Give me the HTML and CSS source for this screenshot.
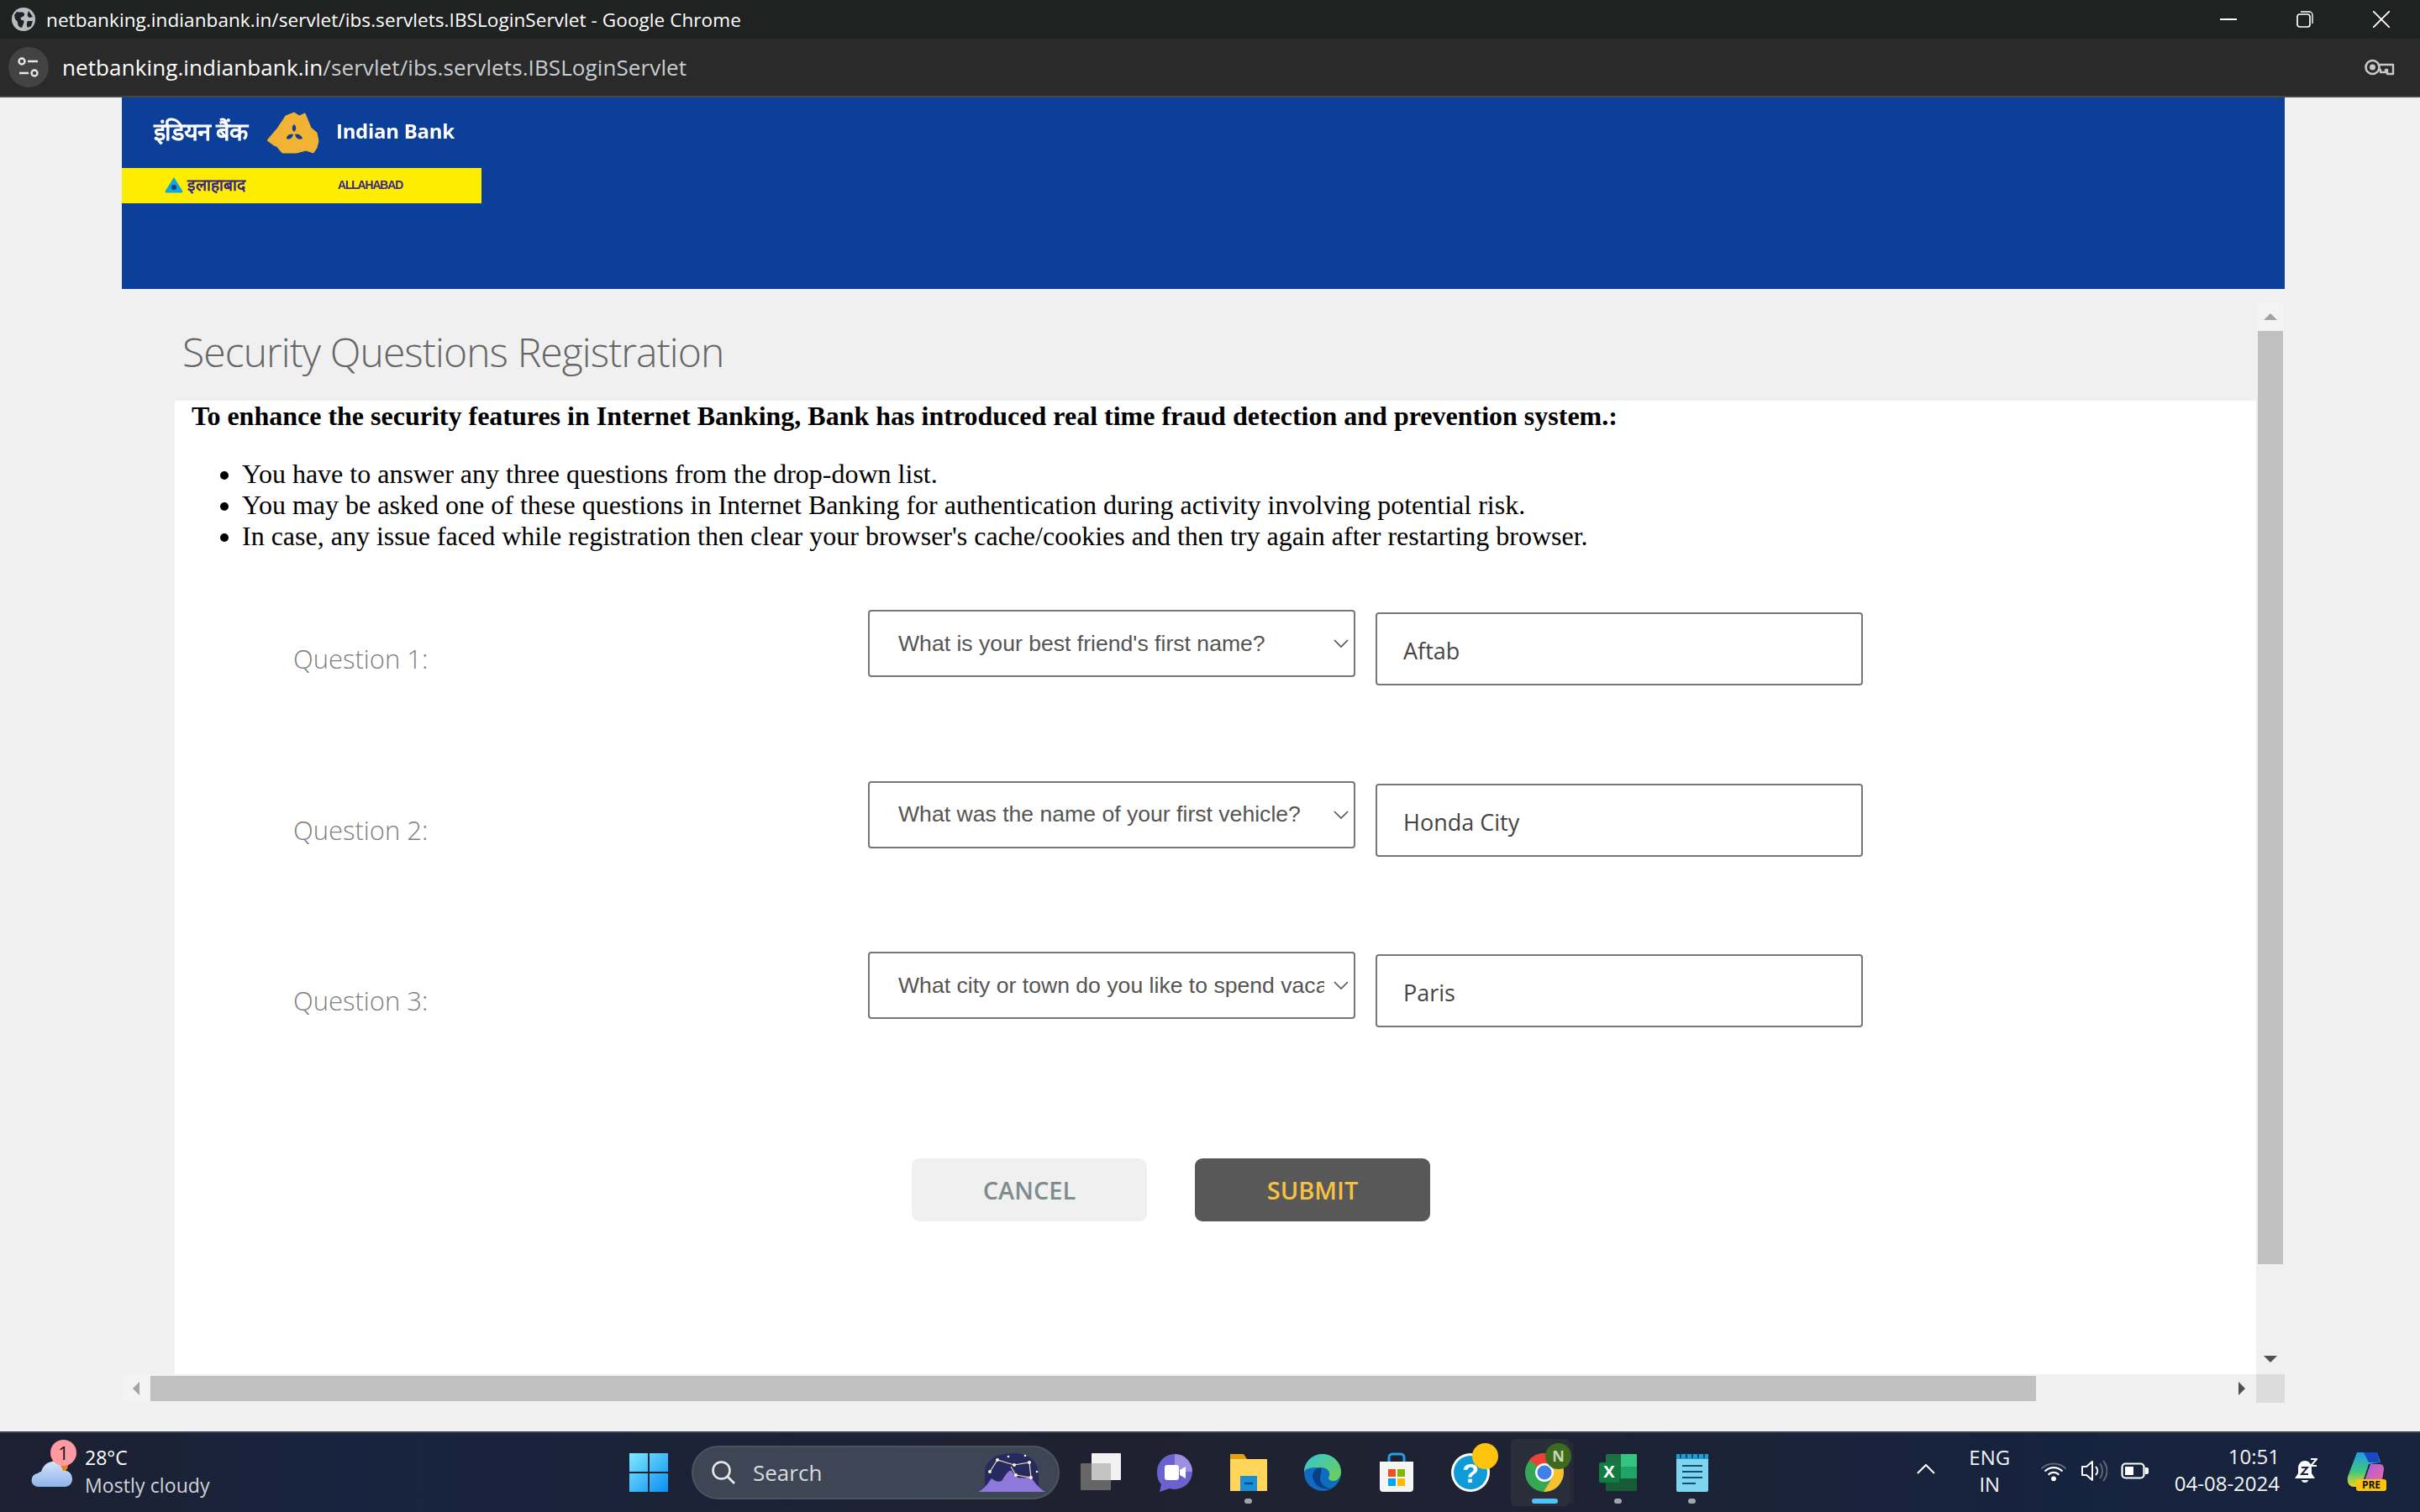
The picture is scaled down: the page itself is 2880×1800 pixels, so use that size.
FILE: index.html
```html
<!DOCTYPE html>
<html lang="en">
<head>
<meta charset="utf-8">
<title>Security Questions Registration</title>
<link rel="stylesheet" href="styles.css">
</head>
<body>
<div class="screen">
  <header class="titlebar">
    <svg class="globe" viewBox="0 0 28 28"><circle cx="14" cy="14" r="14" fill="#b9bcc0"/><path d="M6 5c3 1 6 0 8 1 2 2 1 4-1 5-3 0-3 3-1 4 3 0 3 2 2 4l-2 5c-3 0-5-3-5-6 0-2-2-3-3-4L3 9zM20 4l5 7-4 1c-2-1-3-3-2-5zM19 16l6 0-2 6-4 2c-1-2-2-5 0-8z" fill="#202222"/></svg>
    <span class="title-text">netbanking.indianbank.in/servlet/ibs.servlets.IBSLoginServlet - Google Chrome</span>
    <div class="winctl">
      <svg viewBox="0 0 20 20" class="wc"><path d="M0 10h20" stroke="#fff" stroke-width="2"/></svg>
      <svg viewBox="0 0 20 20" class="wc"><rect x="1" y="4" width="15" height="15" rx="3" fill="none" stroke="#fff" stroke-width="1.7"/><path d="M5 1h10a4 4 0 0 1 4 4v10" fill="none" stroke="#fff" stroke-width="1.4"/></svg>
      <svg viewBox="0 0 20 20" class="wc"><path d="M0 0l20 20M20 0L0 20" stroke="#fff" stroke-width="1.8"/></svg>
    </div>
  </header>
  <div class="addressbar">
    <div class="tune">
      <svg viewBox="0 0 26 28" class="tune-ico"><circle cx="5" cy="7" r="3.5" fill="none" stroke="#e6e6e6" stroke-width="2.4"/><path d="M12 7h12M2 21h11" stroke="#e6e6e6" stroke-width="2.6"/><circle cx="20" cy="21" r="3.5" fill="none" stroke="#e6e6e6" stroke-width="2.4"/></svg>
    </div>
    <span class="url"><span class="url-host">netbanking.indianbank.in</span>/servlet/ibs.servlets.IBSLoginServlet</span>
    <svg class="key" viewBox="0 0 36 20"><circle cx="9.500" cy="10" r="8" fill="none" stroke="#c8c8c8" stroke-width="2.600"/><circle cx="9.500" cy="10" r="3.500" fill="#c8c8c8"/><path d="M17 7h17v11h-7v-5h-2v3h-6v-3h-3" fill="none" stroke="#c8c8c8" stroke-width="2.400" stroke-linejoin="round"/></svg>
  </div>

  <main class="viewport">
    <div class="frame">
      <div class="banner">
        <div class="logo">
          <span class="logo-hi">इंडियन बैंक</span>
          <svg class="emblem" viewBox="0 0 62 50"><path d="M0 34L12 20 22 5 32 1 38 5 45 2 52 19 59 25 61 35 59 43 55 49 46 46 35 49 18 49 11 41 8 40z" fill="#f2b233" stroke="#f2b233" stroke-width="1" stroke-linejoin="round"/><path d="M32 15c3 2 3 7 0 9-3-2-3-7 0-9zM23 32c0-4 4-6 8-5-1 4-4 7-8 5zM33 27c4-1 8 1 9 5-4 2-8 0-9-5z" fill="#0c3f99"/></svg>
          <span class="logo-en">Indian Bank</span>
        </div>
        <div class="logo-strip">
          <svg class="tri" viewBox="0 0 22 20"><path d="M11 1L21 17a1.500 1.500 0 0 1-1 2.500H2A1.500 1.500 0 0 1 1 17z" fill="#10a7df"/><circle cx="11" cy="13" r="3" fill="#1c3c92"/></svg>
          <span class="strip-hi">इलाहाबाद</span>
          <span class="strip-en">ALLAHABAD</span>
        </div>
      </div>
      <div class="scroller">
        <div class="content">
          <h1 class="heading">Security Questions Registration</h1>
          <div class="sheet">
            <p class="intro">To enhance the security features in Internet Banking, Bank has introduced real time fraud detection and prevention system.:</p>
            <ul class="rules">
              <li>You have to answer any three questions from the drop-down list.</li>
              <li>You may be asked one of these questions in Internet Banking for authentication during activity involving potential risk.</li>
              <li>In case, any issue faced while registration then clear your browser's cache/cookies and then try again after restarting browser.</li>
            </ul>
            <form class="qa">
              <div class="qa-row">
                <label class="qa-label">Question 1:</label>
                <div class="fake-select"><span class="fs-text">What is your best friend's first name?</span><svg class="chev" viewBox="0 0 18 10"><path d="M1 1l8 8 8-8" fill="none" stroke="#555" stroke-width="1.700"/></svg></div>
                <div class="fake-input">Aftab</div>
              </div>
              <div class="qa-row">
                <label class="qa-label">Question 2:</label>
                <div class="fake-select"><span class="fs-text">What was the name of your first vehicle?</span><svg class="chev" viewBox="0 0 18 10"><path d="M1 1l8 8 8-8" fill="none" stroke="#555" stroke-width="1.700"/></svg></div>
                <div class="fake-input">Honda City</div>
              </div>
              <div class="qa-row">
                <label class="qa-label">Question 3:</label>
                <div class="fake-select"><span class="fs-text">What city or town do you like to spend vacation?</span><svg class="chev" viewBox="0 0 18 10"><path d="M1 1l8 8 8-8" fill="none" stroke="#555" stroke-width="1.700"/></svg></div>
                <div class="fake-input">Paris</div>
              </div>
              <div class="actions">
                <button type="button" class="btn btn-cancel">CANCEL</button>
                <button type="button" class="btn btn-submit">SUBMIT</button>
              </div>
            </form>
          </div>
        </div>
        <div class="vbar">
          <div class="arrow-btn up"><span class="tri-up"></span></div>
          <div class="vthumb"></div>
          <div class="arrow-btn down"><span class="tri-down"></span></div>
        </div>
        <div class="hbar">
          <div class="arrow-btn-h left"><span class="tri-left"></span></div>
          <div class="hthumb"></div>
          <div class="arrow-btn-h right"><span class="tri-right"></span></div>
        </div>
        <div class="corner"></div>
      </div>
    </div>
  </main>

  <footer class="taskbar">
    <div class="weather">
      <div class="weather-ico">
        <svg viewBox="0 0 48 30" class="cloud"><defs><linearGradient id="cg" x1="0" y1="0" x2="0" y2="1"><stop offset="0" stop-color="#d4e3f8"/><stop offset="1" stop-color="#8fb4ea"/></linearGradient></defs><circle cx="33" cy="4" r="10" fill="#f07f13"/><path d="M8 30a8 8 0 0 1-1-16c1-1 2-2 4-2 2-7 7-12 14-12 6 0 10 4 12 11 6-1 11 3 11 10 0 5-4 9-9 9z" fill="url(#cg)"/></svg>
        <span class="badge">1</span>
      </div>
      <div class="weather-text"><span class="temp">28°C</span><span class="cond">Mostly cloudy</span></div>
    </div>
    <div class="dock">
      <svg class="ti start" viewBox="0 0 48 48"><defs><linearGradient id="wg" x1="0" y1="0" x2="1" y2="1"><stop offset="0" stop-color="#7fe9ff"/><stop offset="1" stop-color="#0a8ff0"/></linearGradient></defs><path d="M1 1h22v22H1zM25 1h22v22H25zM1 25h22v22H1zM25 25h22v22H25z" fill="url(#wg)"/></svg>
      <div class="search">
        <svg class="search-ico" viewBox="0 0 30 30"><circle cx="12.500" cy="12.500" r="10" fill="none" stroke="#e8e8e8" stroke-width="2.600"/><path d="M20 20l8 8" stroke="#e8e8e8" stroke-width="2.800"/></svg>
        <span class="search-text">Search</span>
        <svg class="search-art" viewBox="0 0 80 46"><path d="M8 44V22C8 8 24 0 42 0s30 10 30 24v20z" fill="#262a5e"/><path d="M0 46c6-2 12-10 16-16 4 3 8 5 12 3 4-6 8-14 12-12 4 6 8 10 12 8 4 2 8-2 10-2 4 6 10 15 18 19z" fill="#8f78dc"/><path d="M14 22l9-14 20 6 18-3 2 18-18-3-6-10" fill="none" stroke="#e9dfb8" stroke-width="1.200"/><circle cx="14" cy="22" r="2" fill="#fff6cf"/><circle cx="23" cy="8" r="2" fill="#fff6cf"/><circle cx="43" cy="14" r="2" fill="#fff6cf"/><circle cx="61" cy="11" r="2" fill="#fff6cf"/><circle cx="63" cy="29" r="2" fill="#fff6cf"/><circle cx="45" cy="26" r="2" fill="#fff6cf"/><circle cx="56" cy="3" r="1.300" fill="#fff6cf"/><circle cx="36" cy="4" r="1.300" fill="#fff6cf"/><circle cx="70" cy="22" r="1.300" fill="#fff6cf"/></svg>
      </div>
      <svg class="ti" viewBox="0 0 48 48"><rect x="13" y="1" width="35" height="32" rx="1" fill="#f2f2f2"/><rect x="0" y="13" width="36" height="32" rx="1" fill="#666"/><rect x="13" y="13" width="23" height="20" fill="#c4c4c4"/></svg>
      <svg class="ti" viewBox="0 0 48 48"><path d="M24 2a21 21 0 0 1 21 21 21 21 0 0 1-27 20l-12 4 2-9C4 34 3 29 3 23A21 21 0 0 1 24 2z" fill="#6a63cf"/><path d="M24 2a21 21 0 0 1 21 21H24z" fill="#9c8ee0"/><rect x="12" y="15" width="17" height="18" rx="3" fill="#fff"/><path d="M30 21l7-4v14l-7-4z" fill="#fff"/></svg>
      <div class="ti-wrap">
        <svg class="ti" viewBox="0 0 48 48"><path d="M2 2h16l4 6h24v38H2z" fill="#e0a213"/><path d="M2 8h44v38H2z" fill="#ffd65a"/><path d="M14 28h20v18H14z" fill="#1b8fd6"/><path d="M19 37h10" stroke="#0b4f8c" stroke-width="2.500"/></svg>
        <span class="dot"></span>
      </div>
      <svg class="ti" viewBox="0 0 48 48"><defs><linearGradient id="eg1" x1="0" y1="0" x2="1" y2="1"><stop offset="0" stop-color="#37c3d8"/><stop offset="1" stop-color="#6fd14a"/></linearGradient></defs><circle cx="24" cy="24" r="22" fill="#0f6cc0"/><path d="M2 24C2 10 13 2 24 2c12 0 22 10 22 21 0 6-4 11-9 11-4 0-6-2-6-4 3-4 1-12-9-12C12 18 3 18 2 24z" fill="url(#eg1)"/><path d="M22 18c-8 1-12 8-9 15 3 8 12 12 21 10-9-1-13-7-13-12 0-5 3-8 1-13z" fill="#0a3f86"/></svg>
      <svg class="ti" viewBox="0 0 48 48"><path d="M15 11V6a4 4 0 0 1 4-4h10a4 4 0 0 1 4 4v5" fill="none" stroke="#22a0e8" stroke-width="3"/><path d="M4 11h40v32a4 4 0 0 1-4 4H8a4 4 0 0 1-4-4z" fill="#f5f5f5"/><path d="M14 20h9v9h-9z" fill="#f25022"/><path d="M25 20h9v9h-9z" fill="#7fba00"/><path d="M14 31h9v9h-9z" fill="#00a4ef"/><path d="M25 31h9v9h-9z" fill="#ffb900"/></svg>
      <div class="ti-wrap">
        <svg class="ti" viewBox="0 0 48 48"><circle cx="24" cy="24" r="23" fill="#fff"/><circle cx="24" cy="24" r="20" fill="#0f9bd8"/><text x="24" y="36" class="help-q">?</text></svg>
        <span class="help-dot"></span>
      </div>
      <div class="ti-active">
        <svg class="ti" viewBox="0 0 48 48"><circle cx="24" cy="24" r="23" fill="#34a853"/><path d="M24 1a23 23 0 0 1 20 12H24l-8 4L6 9A23 23 0 0 1 24 1z" fill="#ea4335"/><path d="M44 13a23 23 0 0 1-21 34l11-18V13z" fill="#fbc02d"/><circle cx="24" cy="24" r="11" fill="#fff"/><circle cx="24" cy="24" r="8.500" fill="#3f7fe8"/></svg>
        <span class="n-badge">N</span>
        <span class="run-bar"></span>
      </div>
      <div class="ti-wrap">
        <svg class="ti" viewBox="0 0 48 48"><rect x="9" y="2" width="37" height="44" rx="2" fill="#1d6f42"/><rect x="27" y="2" width="19" height="15" fill="#33c481"/><rect x="27" y="17" width="19" height="14" fill="#21a366"/><rect x="9" y="31" width="37" height="15" fill="#185c37"/><rect x="1" y="12" width="24" height="24" rx="2" fill="#107c41"/><text x="13" y="30" class="xl-x">X</text></svg>
        <span class="dot"></span>
      </div>
      <div class="ti-wrap">
        <svg class="ti" viewBox="0 0 48 48"><rect x="5" y="5" width="38" height="42" rx="2" fill="#7fd4ee"/><rect x="5" y="2" width="38" height="6" fill="#1c9ed8"/><path d="M12 16h24M12 23h24M12 30h24M12 37h16" stroke="#114f76" stroke-width="2.200"/><path d="M10 1v6M17 1v6M24 1v6M31 1v6M38 1v6" stroke="#0e3f60" stroke-width="1.800"/></svg>
        <span class="dot"></span>
      </div>
    </div>
    <div class="tray">
      <svg class="caret" viewBox="0 0 22 12"><path d="M1 11l10-10 10 10" fill="none" stroke="#fff" stroke-width="2"/></svg>
      <div class="lang"><span>ENG</span><span>IN</span></div>
      <svg class="tray-ico wifi" viewBox="0 0 30 24"><path d="M1 9a20 20 0 0 1 28 0" fill="none" stroke="#5e6674" stroke-width="2"/><path d="M5 12a14 14 0 0 1 20 0M9 16a8 8 0 0 1 12 0" fill="none" stroke="#fff" stroke-width="2.200"/><circle cx="15" cy="20.500" r="2.800" fill="#fff"/></svg>
      <svg class="tray-ico vol" viewBox="0 0 32 26"><path d="M2 8h5l7-6v22l-7-6H2z" fill="none" stroke="#fff" stroke-width="2" stroke-linejoin="round"/><path d="M18 8c3 3 3 7 0 10" fill="none" stroke="#fff" stroke-width="2"/><path d="M23 4c4 5 4 13 0 18M27 1c6 7 6 17 0 24" fill="none" stroke="#5e6674" stroke-width="2"/></svg>
      <svg class="tray-ico batt" viewBox="0 0 33 20"><rect x="1.500" y="1.500" width="26" height="17" rx="4" fill="none" stroke="#fff" stroke-width="2.200"/><rect x="5" y="5" width="10" height="10" fill="#fff"/><path d="M29 6h2a2 2 0 0 1 2 2v4a2 2 0 0 1-2 2h-2z" fill="#fff"/></svg>
      <div class="clock"><span>10:51</span><span>04-08-2024</span></div>
      <svg class="tray-ico bell" viewBox="0 0 27 30"><path d="M12 3c5 0 8 4 8 9v6l4 6H0l4-6v-6c0-5 3-9 8-9zM8 26h8c0 4-8 4-8 0z" fill="#fff"/><path d="M8 11h7l-7 8h8" fill="none" stroke="#182340" stroke-width="2"/><path d="M19 1h7l-7 8h7" fill="none" stroke="#fff" stroke-width="2"/></svg>
      <div class="copilot">
        <svg viewBox="0 0 44 44" class="cop-ico"><defs><linearGradient id="c1" x1="0" y1="0" x2="0" y2="1"><stop offset="0" stop-color="#1f9be8"/><stop offset=".55" stop-color="#3fc77f"/><stop offset="1" stop-color="#f4d21f"/></linearGradient><linearGradient id="c2" x1="0" y1="0" x2="1" y2="1"><stop offset="0" stop-color="#a45be0"/><stop offset="1" stop-color="#f46aa0"/></linearGradient></defs><path d="M12 1h24l4 12-14 2-9 27H8C2 42 0 36 1 30z" fill="url(#c1)"/><path d="M20 1h16l3 12H26z" fill="#1648c8"/><path d="M28 15h11c4 0 5 3 5 6l-3 19c0 2-4 3-6 3H18z" fill="url(#c2)"/></svg>
        <span class="pre">PRE</span>
      </div>
    </div>
  </footer>
</div>
</body>
</html>
```

FILE: styles.css
```css
* { box-sizing: border-box; }
html, body { margin: 0; padding: 0; }
body { width: 2880px; height: 1800px; overflow: hidden; font-family: "Liberation Serif", serif; background: #f0f0f0; }
.screen { width: 2880px; height: 1800px; display: flex; flex-direction: column; }

/* browser chrome */
.titlebar { height: 46px; background: #202222; display: flex; align-items: center; padding: 0 0 0 14px; color: #fff; font-family: "Open Sans", sans-serif; font-size: 22.5px; }
.globe { width: 28px; height: 28px; margin-right: 13px; }
.title-text { letter-spacing: 0.08px; white-space: nowrap; }
.winctl { margin-left: auto; display: flex; gap: 71px; padding-right: 36px; }
.wc { width: 20px; height: 20px; }
.addressbar { height: 70px; background: #2a2a2a; border-bottom: 2px solid #454545; display: flex; align-items: center; padding: 0 0 0 10px; font-family: "Open Sans", sans-serif; font-size: 26px; color: #c9cdd1; }
.tune { width: 48px; height: 48px; border-radius: 50%; background: #434343; display: flex; align-items: center; justify-content: center; margin-right: 16px; }
.tune-ico { width: 26px; height: 28px; }
.url { letter-spacing: 0.1px; white-space: nowrap; }
.url-host { color: #fff; }
.key { width: 36px; height: 20px; margin-left: auto; margin-right: 30px; }

/* page frame */
.viewport { height: 1588px; background: #f0f0f0; padding-left: 145px; }
.frame { width: 2574px; height: 1554px; display: flex; flex-direction: column; }
.banner { height: 228px; background: #0c3f99; display: flex; flex-direction: column; }
.logo { height: 84px; width: 428px; display: flex; align-items: center; color: #fff; filter: blur(0.5px); }
.logo-hi { font-family: "Liberation Sans", sans-serif; font-weight: 700; font-size: 29px; margin-left: 38px; width: 112px; padding-bottom: 6px; white-space: nowrap; letter-spacing: -1px; }
.emblem { width: 62px; height: 50px; margin-left: 23px; flex: none; }
.logo-en { font-family: "Open Sans", sans-serif; font-weight: 700; font-size: 24px; margin-left: 20px; padding-bottom: 6px; white-space: nowrap; letter-spacing: -0.3px; }
.logo-strip { width: 428px; height: 42px; background: #ffed00; display: flex; align-items: center; color: #35258a; font-family: "Liberation Sans", sans-serif; font-weight: 700; }
.tri { width: 22px; height: 20px; margin: 0 0 2px 51px; flex: none; filter: blur(0.4px); }
.strip-hi { font-size: 19.5px; margin-left: 5px; width: 179px; padding-bottom: 4px; white-space: nowrap; filter: blur(0.4px); }
.strip-en { font-size: 14px; letter-spacing: -1.2px; padding-bottom: 2px; white-space: nowrap; filter: blur(0.4px); }

.scroller { flex: 1; display: grid; grid-template-columns: 2540px 34px; grid-template-rows: 1292px 34px; }
.content { padding-left: 63px; display: flex; flex-direction: column; min-width: 0; }
.heading { margin: 0; height: 133px; padding: 43px 0 0 9px; font-family: "Open Sans", sans-serif; font-weight: 300; font-size: 48px; letter-spacing: -0.9px; line-height: 64px; color: #666; white-space: nowrap; }
.sheet { flex: 1; background: #fff; padding-left: 20px; }
.intro { margin: 0; font-weight: 700; font-size: 32px; line-height: 37px; color: #000; white-space: nowrap; }
.rules { margin: 32px 0 0; padding: 0 0 0 60px; font-size: 32px; line-height: 36.8px; color: #000; }
.rules li { white-space: nowrap; }

.qa { display: flex; flex-direction: column; margin-top: 70px; }
.qa-row { height: 203.500px; display: grid; grid-template-columns: 781px 580px 580px; column-gap: 24px; align-items: start; }
.qa-label { padding: 36px 0 0 121px; font-family: "Open Sans", sans-serif; font-size: 31px; line-height: 44px; color: #7e7e7e; font-weight: 300; }
.fake-select { height: 80px; width: 580px; border: 2px solid #767676; border-radius: 4px; display: flex; align-items: center; font-family: "Liberation Sans", sans-serif; font-size: 26.6px; color: #555; padding-left: 34px; }
.fs-text { display: block; width: 507px; overflow: hidden; white-space: nowrap; }
.chev { width: 18px; height: 10px; margin-left: 11px; flex: none; }
.fake-input { margin-top: 3px; height: 87px; width: 580px; border: 2px solid #767676; border-radius: 4px; display: flex; align-items: center; padding: 4px 0 0 31px; font-family: "Open Sans", sans-serif; font-size: 27px; color: #444; }

.actions { display: flex; gap: 57px; padding: 42px 0 0 857px; }
.btn { width: 280px; height: 75px; border: 0; border-radius: 9px; font-family: "Open Sans", sans-serif; font-weight: 600; font-size: 29px; }
.btn-cancel { background: #f0f0f0; color: #7f8c8d; }
.btn-submit { background: #585858; color: #f5c242; }

/* scrollbars */
.vbar { background: #f0f0f0; padding-top: 16px; display: flex; flex-direction: column; align-items: center; }
.arrow-btn { width: 34px; height: 34px; display: flex; align-items: center; justify-content: center; background: #f3f3f3; flex: none; }
.arrow-btn.down { background: #f0f0f0; height: 131px; align-items: flex-end; padding-bottom: 14px; }
.vthumb { width: 30px; height: 1111px; background: #c0c0c0; flex: none; }
.hbar { background: #f0f0f0; display: flex; align-items: center; }
.arrow-btn-h { width: 34px; height: 34px; display: flex; align-items: center; justify-content: center; background: #f3f3f3; flex: none; }
.arrow-btn-h.right { margin-left: auto; background: #f0f0f0; }
.hthumb { width: 2244px; height: 30px; background: #c0c0c0; }
.corner { background: #dcdcdc; }
.tri-up, .tri-down, .tri-left, .tri-right { display: block; width: 0; height: 0; border-style: solid; border-color: transparent; }
.tri-up { border-width: 0 8px 8px; border-bottom-color: #a3a3a3; }
.tri-down { border-width: 8px 8px 0; border-top-color: #505050; }
.tri-left { border-width: 8px 8px 8px 0; border-right-color: #a3a3a3; }
.tri-right { border-width: 8px 0 8px 8px; border-left-color: #505050; }

/* taskbar */
.taskbar { height: 96px; border-top: 2px solid #3b404e; background: linear-gradient(90deg, #1d2030 0%, #18243f 14%, #1f2130 45%, #1e2232 62%, #16233f 85%, #18233e 100%); display: flex; align-items: center; position: relative; color: #fff; font-family: "Open Sans", sans-serif; }
.weather { display: flex; align-items: center; width: 720px; padding-left: 38px; }
.weather-ico { width: 62px; height: 64px; position: relative; }
.cloud { width: 48px; height: 30px; position: absolute; left: 0; top: 19px; overflow: visible; }
.badge { position: absolute; left: 22px; top: -7px; width: 31px; height: 31px; border-radius: 50%; background: #ff9aa2; color: #111; font-size: 22px; line-height: 31px; text-align: center; }
.weather-text { display: flex; flex-direction: column; font-size: 23px; line-height: 33px; margin-left: 1px; padding-bottom: 2px; }
.temp { color: #fff; }
.cond { color: #d2d4d8; letter-spacing: 0.1px; }
.dock { position: absolute; left: 748px; top: 4px; display: flex; align-items: center; height: 86px; }
.ti { width: 48px; height: 48px; display: block; flex: none; }
.search { width: 438px; height: 64px; margin: 0 25px 0 27px; border-radius: 32px; background: #3e4656; border: 2px solid #4b5260; display: flex; align-items: center; padding-left: 21px; flex: none; }
.search-ico { width: 30px; height: 30px; flex: none; }
.search-text { font-size: 26px; color: #d8dade; margin-left: 20px; }
.search-art { width: 80px; height: 46px; margin-left: auto; margin-right: 15px; }
.dock > svg.ti, .dock > .ti-wrap { margin-right: 40px; }
.dock > svg.start { margin-right: 0; }
.ti-wrap { position: relative; width: 48px; height: 48px; flex: none; }
.dot { position: absolute; left: 19px; top: 55px; width: 9px; height: 6px; border-radius: 3px; background: #a3a5a8; }
.help-q { font-family: "Liberation Sans", sans-serif; font-weight: 700; font-size: 32px; fill: #fff; text-anchor: middle; }
.help-dot { position: absolute; left: 26px; top: -11px; width: 31px; height: 31px; border-radius: 50%; background: #fdc30d; }
.ti-active { position: relative; width: 70px; height: 80px; margin: 0 34px 0 -16px; padding: 16px 0 0 16px; background: #2a2d3a; border-radius: 6px; flex: none; box-shadow: 8px 0 0 -3px #262935; }
.n-badge { position: absolute; left: 41px; top: 5px; width: 31px; height: 31px; border-radius: 50%; background: #3e6a1e; color: #c9d5b5; font-size: 18px; font-weight: 700; text-align: center; line-height: 31px; }
.run-bar { position: absolute; left: 25px; bottom: 3px; width: 31px; height: 6px; border-radius: 3px; background: #4fc3f7; }
.xl-x { font-family: "Open Sans", sans-serif; font-weight: 700; font-size: 20px; fill: #fff; text-anchor: middle; }
.tray { margin-left: auto; display: flex; align-items: center; padding-right: 40px; }
.caret { width: 22px; height: 12px; margin: 0 35px 8px 0; }
.lang { display: flex; flex-direction: column; align-items: center; font-size: 24px; line-height: 32px; width: 60px; margin-right: 30px; padding-bottom: 4px; color: #f2f2f2; }
.tray-ico { display: block; flex: none; }
.wifi { width: 32px; height: 25px; margin-right: 16px; margin-bottom: 4px; }
.vol { width: 32px; height: 26px; margin-right: 16px; margin-bottom: 4px; }
.batt { width: 33px; height: 20px; margin-right: 31px; margin-bottom: 4px; }
.clock { display: flex; flex-direction: column; align-items: flex-end; font-size: 24px; line-height: 32px; margin-right: 18px; padding-bottom: 6px; color: #f4f4f4; }
.bell { width: 27px; height: 30px; margin-right: 35px; margin-bottom: 4px; }
.copilot { position: relative; width: 47px; height: 46px; margin-bottom: 4px; }
.cop-ico { width: 44px; height: 44px; display: block; }
.pre { position: absolute; left: 11px; bottom: -1px; width: 36px; height: 14px; background: #fdc30d; color: #111; font-size: 12px; font-weight: 700; line-height: 14px; text-align: center; border-radius: 3px; }
```
